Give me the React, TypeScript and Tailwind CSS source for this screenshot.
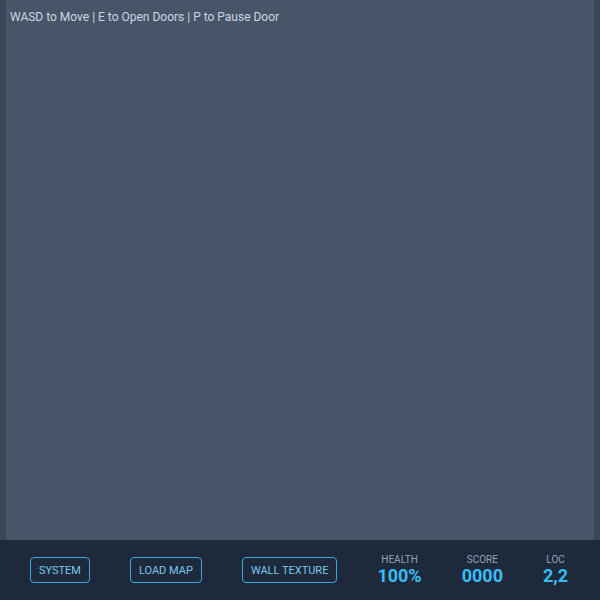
export default function App() {
  const stats = [
    { label: "HEALTH", value: "100%" },
    { label: "SCORE", value: "0000" },
    { label: "LOC", value: "2,2" },
  ];
  return (
    <div className="flex h-screen w-full flex-col bg-[#1e293b]" style={{ fontFamily: "Roboto, 'Liberation Sans', sans-serif" }}>
      <div className="flex-1 bg-[#3b4658] px-[6px]">
        <div className="h-full bg-[#475569] px-[4px] pt-[9px]">
          <div className="text-[12px] leading-[16px] text-[#cbd5e1]">WASD to Move | E to Open Doors | P to Pause Door</div>
        </div>
      </div>
      <div className="flex h-[60px] items-center justify-center gap-10 bg-[#1e293b] pr-[2px]">
        {["SYSTEM", "LOAD MAP", "WALL TEXTURE"].map((b) => (
          <button key={b} className="h-[26px] rounded-[4px] border border-[#38a9dc] px-2 text-[11px] leading-none text-[#7cc8ec]">
            {b}
          </button>
        ))}
        {stats.map((s) => (
          <div key={s.label} className="flex flex-col items-center">
            <div className="text-[10px] leading-[12px] text-[#94a3b8]">{s.label}</div>
            <div className="text-[18px] font-bold leading-[20px] text-[#38bdf8]">{s.value}</div>
          </div>
        ))}
      </div>
    </div>
  );
}
